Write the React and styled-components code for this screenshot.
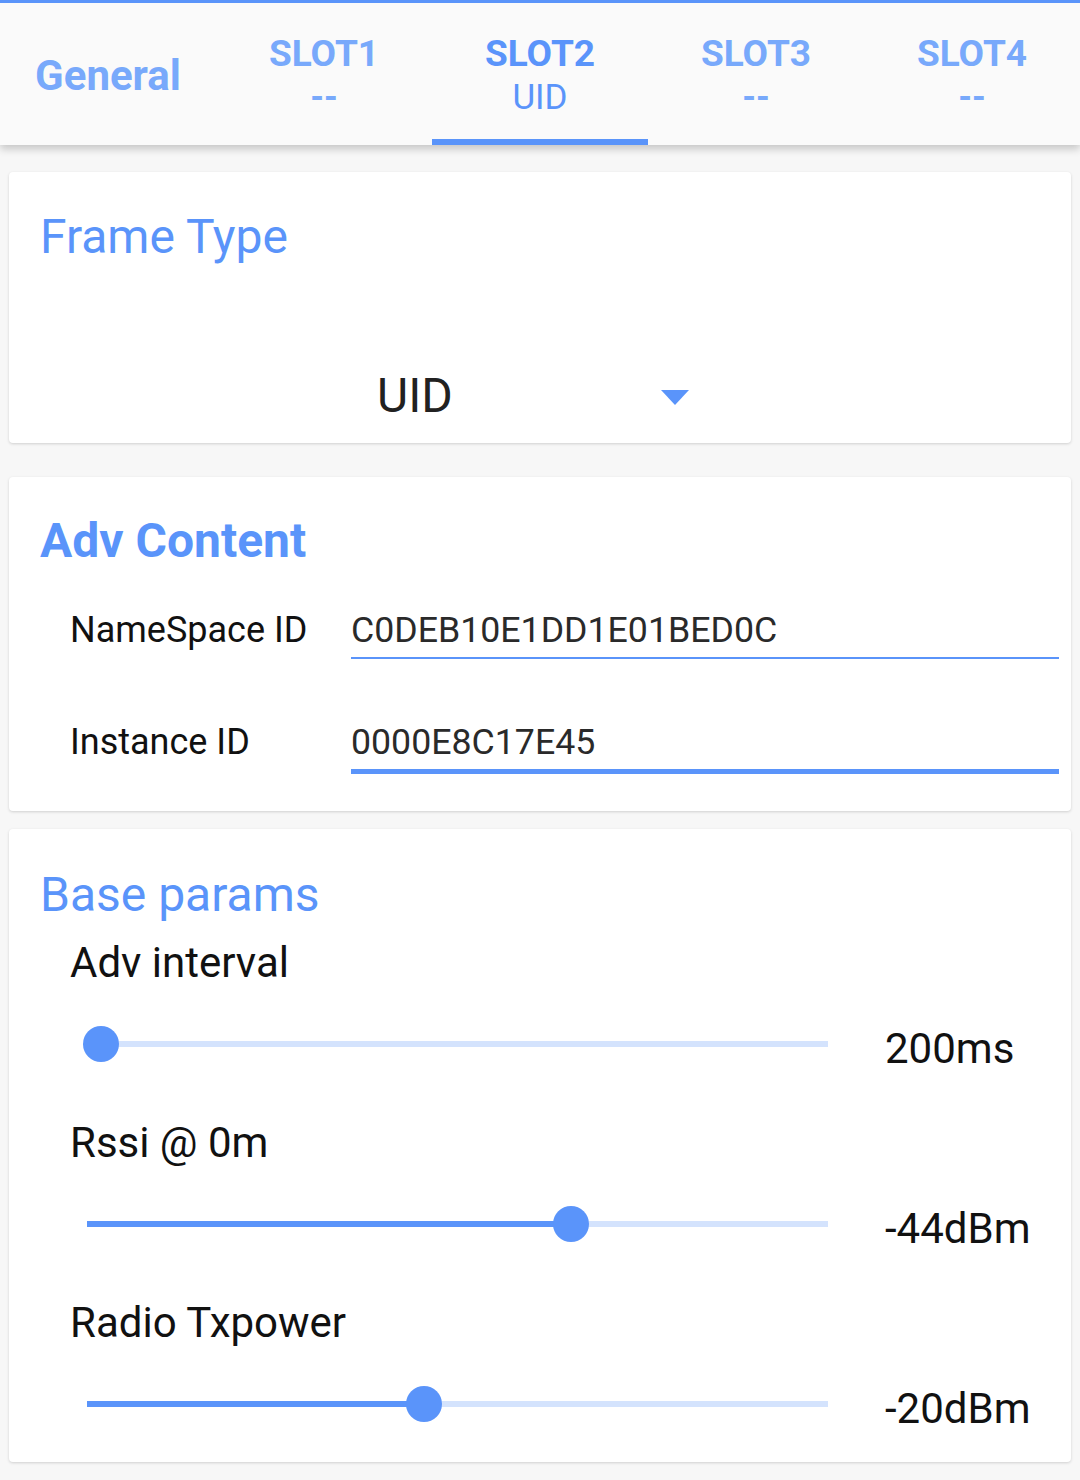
import React, { useState } from 'react';
import styled, { createGlobalStyle } from 'styled-components';

const BLUE = '#5a94fa';
const BLUE_LIGHT = '#78a9fb';
const TRACK = '#d4e3fd';

const GlobalStyle = createGlobalStyle`
  body {
    margin: 0;
    background-color: #f7f7f7;
    font-family: Roboto, "Liberation Sans", sans-serif;
  }
`;

const Page = styled.div`
  width: 1080px;
  min-height: 1480px;
  background-color: #f7f7f7;
`;

const TabBar = styled.nav`
  display: grid;
  grid-template-columns: repeat(5, 1fr);
  height: 142px;
  border-top: 3px solid ${BLUE};
  background-color: #fafafa;
  box-shadow: 0 4px 8px rgba(0, 0, 0, 0.2);
  position: relative;
  z-index: 1;
`;

const Tab = styled.div`
  display: flex;
  flex-direction: column;
  align-items: center;
  justify-content: center;
  color: ${({ $active }) => ($active ? BLUE : BLUE_LIGHT)};
  border-bottom: 6px solid ${({ $active }) => ($active ? BLUE : 'transparent')};
  padding-top: 9px;
`;

const TabTitle = styled.div`
  font-weight: 700;
  font-size: ${({ $big }) => ($big ? '42px' : '37px')};
  line-height: 42px;
`;

const TabSub = styled.div`
  margin-top: 3px;
  font-size: 35px;
  line-height: 40px;
  font-weight: ${({ $bold }) => ($bold ? 700 : 400)};
`;

const Content = styled.main`
  padding-top: 27px;
  display: flex;
  flex-direction: column;
`;

const Card = styled.section`
  margin: 0 9px ${({ $after }) => $after || 0}px;
  background-color: #fff;
  border-radius: 4px;
  box-shadow: 0 1px 3px rgba(0, 0, 0, 0.16);
  padding: ${({ $pad }) => $pad};
`;

const CardTitle = styled.h2`
  margin: 0;
  padding-left: 31px;
  font-size: 48px;
  line-height: 56px;
  font-weight: ${({ $bold }) => ($bold ? 700 : 400)};
  color: ${BLUE};
`;

const SelectBox = styled.div`
  display: flex;
  align-items: center;
  justify-content: space-between;
  width: 312px;
  margin: 103px 0 0 368px;
  font-size: 48px;
  line-height: 56px;
  color: #212121;
`;

const Caret = styled.span`
  width: 0;
  height: 0;
  margin-top: 2px;
  border-left: 14.5px solid transparent;
  border-right: 14.5px solid transparent;
  border-top: 15px solid ${BLUE};
`;

const FieldRow = styled.div`
  display: grid;
  grid-template-columns: 281px 1fr;
  align-items: start;
  padding: 0 12px 0 61px;
  margin-top: ${({ $top }) => $top}px;
`;

const FieldLabel = styled.span`
  font-size: 36px;
  line-height: 42px;
  color: #111;
`;

const FieldInput = styled.div`
  font-size: 35.7px;
  line-height: 42px;
  color: #2a2a2a;
  padding-bottom: 6px;
  border-bottom: ${({ $focused }) => ($focused ? '5px' : '2.5px')} solid ${BLUE};
`;

const ParamLabel = styled.div`
  padding-left: 61px;
  margin-top: ${({ $top }) => $top}px;
  font-size: 42px;
  line-height: 49px;
  color: #111;
`;

const SliderRow = styled.div`
  display: flex;
  align-items: center;
  height: 60px;
  margin-top: 27px;
  padding-left: 78px;
`;

const Track = styled.div`
  position: relative;
  width: 741px;
  height: 6px;
  background-color: ${TRACK};
`;

const TrackFill = styled.div`
  height: 100%;
  background-color: ${BLUE};
`;

const Thumb = styled.div`
  position: absolute;
  top: 50%;
  width: 36px;
  height: 36px;
  border-radius: 50%;
  background-color: ${BLUE};
  transform: translate(-50%, -50%);
`;

const SliderValue = styled.span`
  margin-left: 57px;
  padding-top: 8px;
  font-size: 42px;
  line-height: 49px;
  color: #111;
`;

const tabs = [
  { title: 'General' },
  { title: 'SLOT1', sub: '--' },
  { title: 'SLOT2', sub: 'UID' },
  { title: 'SLOT3', sub: '--' },
  { title: 'SLOT4', sub: '--' },
];

const params = [
  { label: 'Adv interval', value: '200ms', pct: 1.9 },
  { label: 'Rssi @ 0m', value: '-44dBm', pct: 65.3 },
  { label: 'Radio Txpower', value: '-20dBm', pct: 45.5 },
];

const Slider = ({ pct, value }) => (
  <SliderRow>
    <Track>
      <TrackFill style={{ width: `${pct}%` }} />
      <Thumb style={{ left: `${pct}%` }} />
    </Track>
    <SliderValue>{value}</SliderValue>
  </SliderRow>
);

const App = () => {
  const [active] = useState(2);

  return (
    <Page>
      <GlobalStyle />
      <TabBar>
        {tabs.map((t, i) => (
          <Tab key={t.title} $active={i === active}>
            <TabTitle $big={!t.sub}>{t.title}</TabTitle>
            {t.sub && <TabSub $bold={t.sub === '--'}>{t.sub}</TabSub>}
          </Tab>
        ))}
      </TabBar>

      <Content>
        <Card $after={34} $pad="37px 0 19px">
          <CardTitle>Frame Type</CardTitle>
          <SelectBox>
            <span>UID</span>
            <Caret />
          </SelectBox>
        </Card>

        <Card $after={18} $pad="36px 0 37px">
          <CardTitle $bold>Adv Content</CardTitle>
          <FieldRow $top={40}>
            <FieldLabel>NameSpace ID</FieldLabel>
            <FieldInput>C0DEB10E1DD1E01BED0C</FieldInput>
          </FieldRow>
          <FieldRow $top={62}>
            <FieldLabel>Instance ID</FieldLabel>
            <FieldInput $focused>0000E8C17E45</FieldInput>
          </FieldRow>
        </Card>

        <Card $pad="38px 0 28px">
          <CardTitle>Base params</CardTitle>
          {params.map((p, i) => (
            <React.Fragment key={p.label}>
              <ParamLabel $top={i === 0 ? 15 : 44}>{p.label}</ParamLabel>
              <Slider pct={p.pct} value={p.value} />
            </React.Fragment>
          ))}
        </Card>
      </Content>
    </Page>
  );
};

export default App;
